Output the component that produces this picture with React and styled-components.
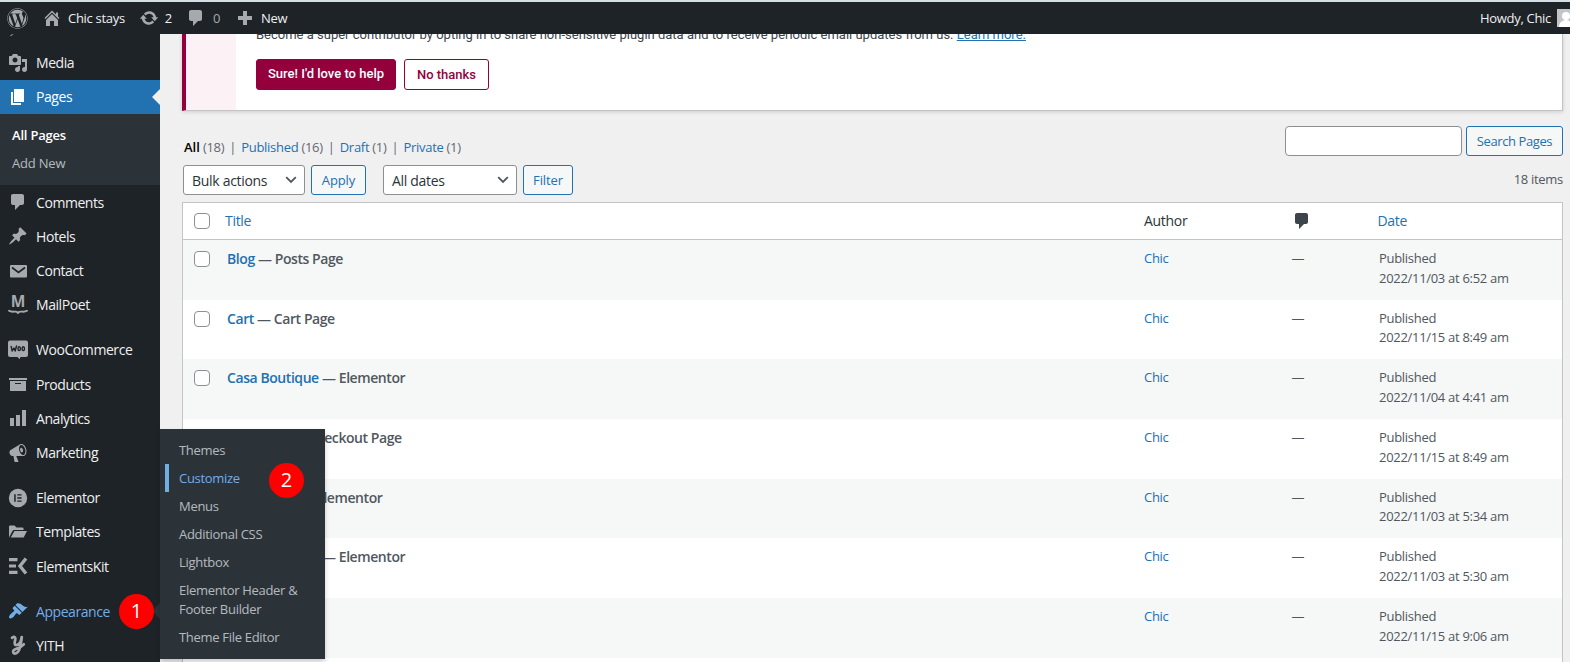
import React from "react";
import styled, { createGlobalStyle, css } from "styled-components";
import { FaWordpress } from "react-icons/fa";

const Global = createGlobalStyle`
  * { box-sizing: border-box; }
  body {
    margin: 0;
    overflow: hidden;
    background: #f0f0f1;
    color: #3c434a;
    font-family: "Open Sans", "Noto Sans", sans-serif;
    font-size: 13px;
    letter-spacing: -0.3px;
  }
`;

const Screen = styled.div`
  width: 1570px;
  height: 662px;
  display: flex;
  flex-direction: column;
  overflow: hidden;
`;

const AdminBar = styled.header`
  flex: none;
  height: 34px;
  display: flex;
  align-items: center;
  background: #1d2327;
  border-top: 2px solid #d3dfe3;
  color: #f0f0f1;
  padding-left: 7px;
  position: relative;
  z-index: 3;
`;

const BarItem = styled.div`
  display: flex;
  align-items: center;
  gap: ${(p) => p.$gap || 6}px;
  margin-right: ${(p) => p.$after || 0}px;
  color: ${(p) => (p.$dim ? "#a7aaad" : "#f0f0f1")};
  line-height: 32px;
  white-space: nowrap;
`;

const Spacer = styled.div`
  flex: 1;
`;

const Avatar = styled.div`
  width: 18px;
  height: 18px;
  margin-right: -5px;
  background: #c3c4c7;
  display: flex;
`;

const Glyph = styled.svg`
  flex: none;
  width: ${(p) => p.$size || 20}px;
  height: ${(p) => p.$size || 20}px;
  fill: ${(p) => p.$color || "#a7aaad"};
  overflow: visible;
`;

const Body = styled.div`
  flex: 1;
  min-height: 0;
  display: flex;
`;

const Sidebar = styled.nav`
  flex: none;
  width: 160px;
  background: #1d2327;
  position: relative;
  z-index: 2;
`;

const Clipped = styled.div`
  height: 11.5px;
  padding: 0 0 0 9px;
  overflow: hidden;
  svg { display: block; }
`;

const MenuItem = styled.div`
  position: relative;
  height: 34.25px;
  display: flex;
  align-items: center;
  gap: 8px;
  padding-left: 8px;
  margin-top: ${(p) => (p.$group ? 10.75 : 0)}px;
  font-size: 14px;
  letter-spacing: -0.43px;
  color: ${(p) => (p.$hot ? "#72aee6" : "#f0f0f1")};
  ${(p) =>
    p.$current &&
    css`
      background: #2271b1;
      color: #fff;
      &::after {
        content: "";
        position: absolute;
        right: 0;
        top: 9px;
        border: 8px solid transparent;
        border-right-color: #f0f0f1;
        border-left: 0;
      }
    `}
`;

const SubMenu = styled.div`
  height: 71px;
  padding: 7px 12px;
  background: #2c3338;
`;

const SubLink = styled.div`
  height: 28px;
  line-height: 28px;
  color: ${(p) => (p.$current ? "#fff" : "rgba(240, 246, 252, 0.7)")};
  font-weight: ${(p) => (p.$current ? 600 : 400)};
  letter-spacing: -0.2px;
`;

const Flyout = styled.div`
  position: absolute;
  left: 160px;
  bottom: -31px;
  width: 165px;
  height: 230px;
  padding: 7px 0;
  background: #2c3338;
  box-shadow: 0 3px 5px rgba(0, 0, 0, 0.2);
`;

const FlyLink = styled.div`
  width: max-content;
  margin-left: 5px;
  padding: 4.5px 0 4.5px 10px;
  border-left: 4px solid ${(p) => (p.$hot ? "#72aee6" : "transparent")};
  color: ${(p) => (p.$hot ? "#72aee6" : "rgba(240, 246, 252, 0.7)")};
  font-size: 13px;
  line-height: 19px;
  letter-spacing: -0.3px;
  white-space: pre;
`;

const FlyPointer = styled.div`
  position: absolute;
  right: 0;
  top: 9px;
  border: 8px solid transparent;
  border-right-color: #2c3338;
  border-left: 0;
`;

const Badge = styled.div`
  position: absolute;
  left: ${(p) => p.$x}px;
  top: ${(p) => p.$y}px;
  width: 35px;
  height: 35px;
  border-radius: 50%;
  background: #fe0000;
  color: #fff;
  display: flex;
  align-items: center;
  justify-content: center;
  font-size: 20px;
  letter-spacing: 0;
  line-height: 20px;
  padding-bottom: 2px;
`;

const Content = styled.main`
  flex: 1;
  min-width: 0;
  padding: 0 7px 0 22px;
`;

const Notice = styled.section`
  height: 76.5px;
  display: flex;
  background: #fff;
  border: 1px solid #c3c4c7;
  border-top: 0;
  border-left: 4px solid #93003c;
  box-shadow: 0 1px 4px rgba(0, 0, 0, 0.15);
  font-family: Roboto, sans-serif;
  letter-spacing: 0;
`;

const NoticeAside = styled.div`
  width: 50px;
  background: #fcf2f6;
`;

const NoticeBody = styled.div`
  padding-left: 20px;
`;

const NoticeText = styled.p`
  margin: -8px 0 16px;
  font-size: 13px;
  line-height: 17px;
  color: #3c434a;
  white-space: nowrap;
  a { color: #2271b1; text-decoration: underline; }
`;

const NoticeActions = styled.div`
  display: flex;
  gap: 8px;
`;

const NoticeButton = styled.button`
  width: ${(p) => p.$w}px;
  height: 31px;
  padding: 0 0 ${(p) => (p.$solid ? 2 : 0)}px;
  border: 1px solid #93003c;
  border-radius: 3px;
  background: ${(p) => (p.$solid ? "#93003c" : "#fff")};
  color: ${(p) => (p.$solid ? "#fff" : "#93003c")};
  font: 500 13px Roboto, sans-serif;
`;

const Filters = styled.div`
  height: 91.5px;
  display: flex;
  justify-content: space-between;
`;

const FiltersLeft = styled.div`
  padding-top: 27px;
`;

const FiltersRight = styled.div`
  padding-top: 15.5px;
  display: flex;
  flex-direction: column;
  align-items: flex-end;
`;

const Views = styled.div`
  height: 19px;
  line-height: 19px;
  padding-left: 2px;
  color: #646970;
  a { color: #2271b1; }
  b { color: #000; font-weight: 600; letter-spacing: 0; }
`;

const Divider = styled.span`
  margin: 0 2px;
`;

const Controls = styled.div`
  display: flex;
  margin: 8.5px 0 0 1px;
`;

const Select = styled.div`
  width: ${(p) => p.$w}px;
  height: 30px;
  margin-right: 6px;
  padding: 0 5px 0 8px;
  display: flex;
  align-items: center;
  justify-content: space-between;
  border: 1px solid #8c8f94;
  border-radius: 3px;
  background: #fff;
  color: #2c3338;
  font-size: 14px;
`;

const Button = styled.button`
  width: ${(p) => p.$w}px;
  height: 30px;
  margin-right: ${(p) => p.$after || 0}px;
  padding: 0;
  border: 1px solid #2271b1;
  border-radius: 3px;
  background: #f6f7f7;
  color: #2271b1;
  font: inherit;
  letter-spacing: ${(p) => p.$tracking || -0.1}px;
  white-space: nowrap;
`;

const SearchRow = styled.div`
  display: flex;
  gap: 4px;
`;

const SearchInput = styled.input`
  width: 177px;
  height: 30px;
  border: 1px solid #8c8f94;
  border-radius: 4px;
  background: #fff;
`;

const Count = styled.div`
  margin-top: 14px;
  line-height: 19px;
  color: #50575e;
`;

const Table = styled.div`
  background: #fff;
  border: 1px solid #c3c4c7;
  border-bottom: 0;
  padding-bottom: 20px;
`;

const Row = styled.div`
  display: grid;
  grid-template-columns: 42px 919px 147.5px 86px 1fr;
  height: ${(p) => (p.$head ? 37 : 59.7)}px;
  ${(p) => (p.$head ? "border-bottom: 1px solid #c3c4c7; align-items: center; font-size: 14px;" : "padding-top: 9px;")}
  background: ${(p) => (p.$odd ? "#f6f7f7" : "#fff")};
  line-height: 19.5px;
`;

const CheckBox = styled.span`
  display: block;
  width: 16px;
  height: 16px;
  margin: ${(p) => (p.$head ? "0" : "2px")} 0 0 11px;
  border: 1px solid #8c8f94;
  border-radius: 4px;
  background: #fff;
`;

const Title = styled.div`
  padding-left: 2px;
  font-size: 14px;
  font-weight: 600;
  letter-spacing: -0.43px;
  color: #50575e;
  a { color: #2271b1; }
`;

const Cell = styled.div`
  padding-left: ${(p) => p.$pad || 0}px;
  color: ${(p) => (p.$link ? "#2271b1" : p.$dark ? "#2c3338" : "#50575e")};
`;

const paths = {
  home: "M16 8.5l1.53 1.53-1.06 1.06L10 4.6l-6.47 6.49-1.06-1.06L10 2.5l4 4v-2h2v4zm-6-2.46l6 5.99V18H12v-5H8v5H4v-5.97z",
  update:
    "M10.2 3.28c3.53 0 6.43 2.61 6.92 6h2.08l-3.5 4-3.5-4h2.32c-.45-1.97-2.21-3.45-4.32-3.45-1.45 0-2.73.71-3.54 1.78L4.95 5.66C6.23 4.2 8.11 3.28 10.2 3.28zm-.4 13.44c-3.52 0-6.43-2.61-6.92-6H.8l3.5-4c1.17 1.33 2.33 2.67 3.5 4H5.48c.45 1.97 2.21 3.45 4.32 3.45 1.45 0 2.73-.71 3.54-1.78l1.71 1.95c-1.28 1.46-3.15 2.38-5.25 2.38z",
  comments: "M5 2h9c1.1 0 2 .9 2 2v7c0 1.1-.9 2-2 2h-2l-5 5v-5H5c-1.1 0-2-.9-2-2V4c0-1.1.9-2 2-2z",
  plus: "M17 8v4h-5v5H8v-5H3V8h5V3h4v5z",
  media:
    "M13 11V4c0-.55-.45-1-1-1h-1.67L9 1H5L3.67 3H2c-.55 0-1 .45-1 1v7c0 .55.45 1 1 1h10c.55 0 1-.45 1-1zM7 4.5c1.38 0 2.5 1.12 2.5 2.5S8.38 9.5 7 9.5 4.5 8.38 4.5 7 5.62 4.5 7 4.5zM14 6h5v10.500c0 1.38-1.12 2.5-2.5 2.5S14 17.88 14 16.500s1.120-2.500 2.500-2.500c.17 0 .34.02.5.05V9h-3V6zm-4 8.050V13h2v3.500c0 1.38-1.12 2.5-2.5 2.5S7 17.88 7 16.500 8.120 14 9.500 14c.17 0 .34.02.5.05z",
  page: "M6 15V2h10v13H6zm-1 1h8v2H3V5h2v11z",
  pin: "M10.44 3.02l1.82-1.82 6.36 6.35-1.83 1.82c-1.05-.68-2.48-.57-3.41.36l-.75.75c-.92.93-1.04 2.35-.35 3.41l-1.83 1.82-2.41-2.41-2.8 2.79c-.42.42-3.38 2.71-3.8 2.29s1.86-3.39 2.28-3.81l2.79-2.79L4.1 9.36l1.83-1.82c1.05.69 2.48.57 3.4-.36l.75-.75c.93-.92 1.05-2.35.36-3.41z",
  archive: "M19 4v2H1V4h18zM2 7h16v10H2V7zm11 3V9H7v1h6z",
  chart: "M18 18V2h-4v16h4zm-6 0V7H8v11h4zm-6 0v-8H2v8h4z",
  megaphone:
    "M18.15 5.94c.46 1.62.38 3.22-.02 4.48-.42 1.28-1.26 2.18-2.3 2.48-.16.06-.26.06-.4.06-.06.02-.12.02-.18.02-.06.02-.14.02-.22.02h-6.8l2.22 5.5c.02.14-.06.26-.14.34-.08.1-.24.16-.34.16H6.95c-.1 0-.26-.06-.34-.16-.08-.08-.16-.2-.14-.34l-1-5.5H4.25l-.02-.02c-.5.06-1.08-.18-1.54-.62s-.88-1.08-1.06-1.88c-.24-.8-.2-1.56-.02-2.2.18-.62.58-1.08 1.06-1.3l.02-.02 9-5.4c.1-.06.18-.1.24-.16.06-.04.14-.08.24-.12.16-.08.28-.12.5-.18 1.04-.3 2.24.1 3.22.98s1.84 2.24 2.26 3.86zm-2.58 5.98h-.02c.4-.1.74-.34 1.04-.7.58-.7.86-1.76.86-3.04 0-.64-.1-1.3-.28-1.98-.34-1.36-1.02-2.5-1.78-3.24s-1.68-1.1-2.46-.88c-.82.22-1.4.96-1.7 2-.32 1.04-.28 2.36.06 3.72.38 1.36 1 2.5 1.8 3.24.78.74 1.62 1.1 2.48.88zm-2.54-7.08c.22-.04.42-.02.62.04.38.16.76.48 1.02 1s.42 1.2.42 1.78c0 .3-.04.56-.12.8-.18.48-.44.84-.86.94-.34.1-.8-.06-1.14-.4s-.64-.86-.78-1.5c-.18-.62-.12-1.24.02-1.72s.48-.84.82-.94z",
  brush:
    "M14.48 11.06L7.41 3.99l1.5-1.5c.5-.56 2.3-.47 3.51.32 1.21.8 1.43 1.28 2.91 2.1 1.18.64 2.45 1.26 4.45.85zm-.71.71L6.7 4.7 4.93 6.47c-.39.39-.39 1.02 0 1.41l1.06 1.06c.39.39.39 1.03 0 1.42-.6.6-1.43 1.11-2.21 1.69-.35.26-.7.53-1.01.84C1.43 14.23.4 16.08 1.4 17.07c.99 1 2.84-.03 4.18-1.36.31-.31.58-.66.85-1.02.57-.78 1.08-1.61 1.69-2.21.39-.39 1.02-.39 1.41 0l1.06 1.06c.39.39 1.02.39 1.41 0z",
  folder: "M1 15.500V4.500Q1 3.500 2 3.500h4.500l2 2h6q1 0 1 1V8H6.200Q5 8 4.500 9L1 15.500zM6.500 9H19l-3.300 6.500H2.700z",
};

const Icon = ({ name, color, size }) => (
  <Glyph viewBox="0 0 20 20" $color={color} $size={size}>
    <path d={paths[name]} />
  </Glyph>
);

const MailIcon = () => (
  <Glyph viewBox="0 0 20 20">
    <rect x="2" y="4" width="17" height="12.500" rx="1" />
    <path d="M4 6.500l6.500 5 6.500-5" fill="none" stroke="#1d2327" strokeWidth="1.700" />
  </Glyph>
);

const LogoLetter = styled.text`
  font-family: "Open Sans", sans-serif;
  font-weight: 700;
  letter-spacing: 0;
  text-anchor: middle;
`;

const MailPoetIcon = () => (
  <Glyph viewBox="0 0 20 20">
    <LogoLetter x="10" y="12" fontSize="15.500">M</LogoLetter>
    <path d="M1 15.800c3 2 6 .2 7.700 1L10 18l1.300-1.200c1.700-.8 4.700 1 7.700-1" fill="none" stroke="#a7aaad" strokeWidth="1.900" strokeLinecap="round" />
  </Glyph>
);

const WooIcon = () => (
  <Glyph viewBox="0 0 20 20">
    <path d="M2 .500h16a2 2 0 0 1 2 2V15a2 2 0 0 1-2 2h-5.500l-1 2.300L9.500 17H2a2 2 0 0 1-2-2V2.500a2 2 0 0 1 2-2z" />
    <g fill="none" stroke="#1d2327" strokeWidth="1.400" strokeLinejoin="round" strokeLinecap="round">
      <path d="M3.200 6.500l1 4.500L6 8l1.200 3L8.500 6" />
      <ellipse cx="11.200" cy="8.700" rx="1.200" ry="1.900" />
      <ellipse cx="15.300" cy="8.700" rx="1.200" ry="1.900" />
    </g>
  </Glyph>
);

const ElementorIcon = () => (
  <Glyph viewBox="0 0 20 20">
    <circle cx="10" cy="10" r="9.200" />
    <path d="M6.200 6.200h1.500v7.600H6.200zM9.300 6.200h4.300v1.300H9.300zM9.300 9.350h4.300v1.300H9.300zM9.300 12.500h4.300v1.300H9.300z" fill="#1d2327" />
  </Glyph>
);

const ElementsKitIcon = () => (
  <Glyph viewBox="0 0 20 20">
    <path d="M1 2h8.500v3.200H1zM1 8.400h7v3.200H1zM1 14.800h8.500V18H1z" />
    <path d="M18 2.500L12 10l6 7.500" fill="none" stroke="#a7aaad" strokeWidth="3.400" />
  </Glyph>
);

const YithIcon = () => (
  <Glyph viewBox="0 0 20 20">
    <path
      d="M4 2.800C6.500 1 8 2.500 7.200 5 6.200 8.300 6.500 10.300 8.700 10 11 9.700 13 6.500 13.800 2c-.6 5-1.200 9.500-2.800 13.200-1.300 3-4.500 4.300-5.700 2.600-1.200-1.800 1-3.400 3.700-4.300 2.800-1 4.800-2 6.800-4.200"
      fill="none"
      stroke="#a7aaad"
      strokeWidth="2.700"
      strokeLinecap="round"
      strokeLinejoin="round"
    />
  </Glyph>
);

const Chevron = () => (
  <Glyph viewBox="0 0 20 20" $size={16}>
    <path d="M4 6.500l6 6 6-6" fill="none" stroke="#50575e" strokeWidth="2.300" />
  </Glyph>
);

const flyLinks = ["Themes", "Customize", "Menus", "Additional CSS", "Lightbox", "Elementor Header &\nFooter Builder", "Theme File Editor"];

const menu = [
  { label: "Comments", icon: <Icon name="comments" /> },
  { label: "Hotels", icon: <Icon name="pin" /> },
  { label: "Contact", icon: <MailIcon /> },
  { label: "MailPoet", icon: <MailPoetIcon /> },
  { label: "WooCommerce", icon: <WooIcon />, group: true },
  { label: "Products", icon: <Icon name="archive" /> },
  { label: "Analytics", icon: <Icon name="chart" /> },
  { label: "Marketing", icon: <Icon name="megaphone" /> },
  { label: "Elementor", icon: <ElementorIcon />, group: true },
  { label: "Templates", icon: <Icon name="folder" /> },
  { label: "ElementsKit", icon: <ElementsKitIcon /> },
  { label: "Appearance", icon: <Icon name="brush" color="#72aee6" />, group: true, open: true },
  { label: "YITH", icon: <YithIcon /> },
];

const pages = [
  ["Blog", "Posts Page", "2022/11/03 at 6:52 am"],
  ["Cart", "Cart Page", "2022/11/15 at 8:49 am"],
  ["Casa Boutique", "Elementor", "2022/11/04 at 4:41 am"],
  ["Checkout", "Checkout Page", "2022/11/15 at 8:49 am"],
  ["Contact Us", "Elementor", "2022/11/03 at 5:34 am"],
  ["Casa Boutique", "Elementor", "2022/11/03 at 5:30 am"],
  ["Gallery", "", "2022/11/15 at 9:06 am"],
];

export default function App() {
  return (
    <Screen>
      <Global />
      <AdminBar>
        <BarItem $after={14}>
          <FaWordpress size={21} color="#a7aaad" />
        </BarItem>
        <BarItem $after={14}>
          <Icon name="home" />
          <span>Chic stays</span>
        </BarItem>
        <BarItem $after={14}>
          <Icon name="update" />
          <span>2</span>
        </BarItem>
        <BarItem $dim $gap={7} $after={15}>
          <Icon name="comments" />
          <span>0</span>
        </BarItem>
        <BarItem>
          <Icon name="plus" />
          <span>New</span>
        </BarItem>
        <Spacer />
        <BarItem>
          <span>Howdy, Chic</span>
          <Avatar>
            <Glyph viewBox="0 0 18 18" $size={18} $color="#fff">
              <circle cx="9" cy="7" r="4" />
              <path d="M2 18c0-5 4-7 7-7s7 2 7 7z" />
            </Glyph>
          </Avatar>
        </BarItem>
      </AdminBar>
      <Body>
        <Sidebar>
          <Clipped>
            <Glyph viewBox="0 0 20 20" $size={6}>
              <path d="M2 8L8 2l8-1-8 5z" />
            </Glyph>
          </Clipped>
          <MenuItem>
            <Icon name="media" />
            Media
          </MenuItem>
          <MenuItem $current>
            <Icon name="page" color="#fff" />
            Pages
          </MenuItem>
          <SubMenu>
            <SubLink $current>All Pages</SubLink>
            <SubLink>Add New</SubLink>
          </SubMenu>
          {menu.map((m) => (
            <MenuItem key={m.label} $group={m.group} $hot={m.open}>
              {m.icon}
              <span>{m.label}</span>
              {m.open && (
                <>
                  <FlyPointer />
                  <Flyout>
                    {flyLinks.map((l) => (
                      <FlyLink key={l} $hot={l === "Customize"}>
                        {l}
                      </FlyLink>
                    ))}
                    <Badge $x={109} $y={34}>2</Badge>
                  </Flyout>
                  <Badge $x={119} $y={0}>1</Badge>
                </>
              )}
            </MenuItem>
          ))}
        </Sidebar>
        <Content>
          <Notice>
            <NoticeAside />
            <NoticeBody>
              <NoticeText>
                Become a super contributor by opting in to share non-sensitive plugin data and to receive periodic email updates from us. <a>Learn more.</a>
              </NoticeText>
              <NoticeActions>
                <NoticeButton $solid $w={140}>Sure! I'd love to help</NoticeButton>
                <NoticeButton $w={85}>No thanks</NoticeButton>
              </NoticeActions>
            </NoticeBody>
          </Notice>
          <Filters>
            <FiltersLeft>
              <Views>
                <b>All</b> (18) <Divider>|</Divider> <a>Published</a> (16) <Divider>|</Divider> <a>Draft</a> (1) <Divider>|</Divider> <a>Private</a> (1)
              </Views>
              <Controls>
                <Select $w={122}>Bulk actions<Chevron /></Select>
                <Button $w={55} $after={17}>Apply</Button>
                <Select $w={134}>All dates<Chevron /></Select>
                <Button $w={50}>Filter</Button>
              </Controls>
            </FiltersLeft>
            <FiltersRight>
              <SearchRow>
                <SearchInput />
                <Button $w={97} $tracking={-0.4}>Search Pages</Button>
              </SearchRow>
              <Count>18 items</Count>
            </FiltersRight>
          </Filters>
          <Table>
            <Row $head>
              <CheckBox $head />
              <Cell $link>Title</Cell>
              <Cell $dark>Author</Cell>
              <Icon name="comments" color="#3c434a" />
              <Cell $link>Date</Cell>
            </Row>
            {pages.map(([title, state, date], i) => (
              <Row key={i} $odd={i % 2 === 0}>
                <CheckBox />
                <Title>
                  <a>{title}</a>
                  {state && ` — ${state}`}
                </Title>
                <Cell $link>Chic</Cell>
                <Cell>—</Cell>
                <Cell $pad={1.5}>
                  Published
                  <br />
                  {date}
                </Cell>
              </Row>
            ))}
          </Table>
        </Content>
      </Body>
    </Screen>
  );
}
